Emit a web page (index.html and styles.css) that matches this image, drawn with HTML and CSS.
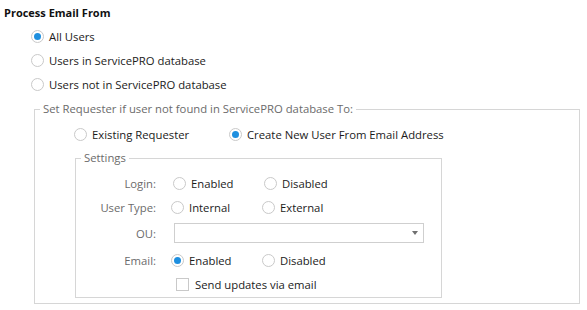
FILE: index.html
```html
<!DOCTYPE html>
<html lang="en">

<head>
    <meta charset="UTF-8">
    <meta name="viewport" content="width=device-width, initial-scale=1.0">
    <title>Process Email From</title>
    <link rel="stylesheet" href="styles.css">
</head>

<body>
    <div class="panel">
        <div class="title">Process Email From</div>
        <div class="sources">
            <label class="option"><span class="radio checked"></span>All Users</label>
            <label class="option"><span class="radio"></span>Users in ServicePRO database</label>
            <label class="option"><span class="radio"></span>Users not in ServicePRO database</label>
        </div>

        <fieldset class="group outer">
            <legend>Set Requester if user not found in ServicePRO database To:</legend>
            <div class="outer-body">
                <div class="requester">
                    <label class="option wide"><span class="radio"></span>Existing Requester</label>
                    <label class="option"><span class="radio checked"></span>Create New User From Email Address</label>
                </div>

                <fieldset class="group settings">
                    <legend>Settings</legend>
                    <div class="settings-body">
                        <div class="field">
                            <span class="field-label">Login:</span>
                            <div class="field-controls login">
                                <label class="option short"><span class="radio"></span>Enabled</label>
                                <label class="option"><span class="radio"></span>Disabled</label>
                            </div>
                        </div>
                        <div class="field">
                            <span class="field-label">User Type:</span>
                            <div class="field-controls">
                                <label class="option short"><span class="radio"></span>Internal</label>
                                <label class="option"><span class="radio"></span>External</label>
                            </div>
                        </div>
                        <div class="field field-ou">
                            <span class="field-label">OU:</span>
                            <div class="field-controls">
                                <div class="combo"><span class="combo-arrow"></span></div>
                            </div>
                        </div>
                        <div class="field field-email">
                            <span class="field-label">Email:</span>
                            <div class="field-controls">
                                <label class="option short"><span class="radio checked"></span>Enabled</label>
                                <label class="option"><span class="radio"></span>Disabled</label>
                            </div>
                        </div>
                        <div class="field field-check">
                            <span class="field-label"></span>
                            <div class="field-controls">
                                <label class="option check-option"><span class="checkbox"></span>Send updates via email</label>
                            </div>
                        </div>
                    </div>
                </fieldset>
            </div>
        </fieldset>
    </div>
</body>

</html>
```

FILE: styles.css
```css
body {
    margin: 0;
    background: #ffffff;
    font-family: "Open Sans", "Noto Sans", Arial, sans-serif;
    font-size: 11.3px;
    color: #1b1b1b;
}

.panel {
    padding: 4px 7px 0 4px;
}

.title {
    font-weight: bold;
    font-size: 11px;
    line-height: 17px;
    height: 18px;
    color: #111111;
}

.sources {
    padding: 2px 0 0 27px;
}

.sources .option {
    height: 24px;
}

.option {
    display: flex;
    align-items: center;
    white-space: nowrap;
}

.radio {
    box-sizing: border-box;
    width: 13px;
    height: 13px;
    border: 1px solid #c9c9c9;
    border-radius: 50%;
    margin-right: 5px;
    display: flex;
    align-items: center;
    justify-content: center;
    flex-shrink: 0;
}

.radio.checked::after {
    content: "";
    width: 7px;
    height: 7px;
    border-radius: 50%;
    background: #1e8fdf;
}

.checkbox {
    box-sizing: border-box;
    width: 13px;
    height: 13px;
    border: 1px solid #c9c9c9;
    margin-right: 6px;
    flex-shrink: 0;
}

.group {
    margin: 0;
    padding: 0;
    border: 1px solid #d6d6d6;
    min-width: 0;
}

.group legend {
    margin-left: 5px;
    padding: 0 3px;
    line-height: 14px;
    color: #6b6b6b;
}

.outer {
    margin: 6px 0 0 30px;
}

.outer-body {
    padding: 6px 0 5px 40px;
}

.requester {
    display: flex;
    height: 24px;
    margin-left: -1px;
}

.option.wide {
    width: 155px;
}

.settings {
    margin-top: 5px;
    width: 367px;
    box-sizing: border-box;
}

.settings-body {
    padding: 6px 0 2px 0;
}

.field {
    display: grid;
    grid-template-columns: 80px 1fr;
    column-gap: 15px;
    align-items: center;
    height: 24px;
}

.field-label {
    text-align: right;
    color: #6b6b6b;
}

.field-controls {
    display: flex;
    align-items: center;
}

.field-controls.login {
    margin-left: 2px;
}

.option.short {
    width: 91px;
}

.field-ou {
    height: 28px;
}

.field-email {
    height: 26px;
}

.field-check {
    height: 22px;
}

.check-option {
    margin-left: 5px;
}

.combo {
    box-sizing: border-box;
    margin-left: 3px;
    width: 250px;
    height: 20px;
    border: 1px solid #cfcfcf;
    display: flex;
    align-items: center;
    justify-content: flex-end;
    padding-right: 5px;
}

.combo-arrow {
    width: 0;
    height: 0;
    border-left: 3px solid transparent;
    border-right: 3px solid transparent;
    border-top: 4px solid #707070;
}
```
